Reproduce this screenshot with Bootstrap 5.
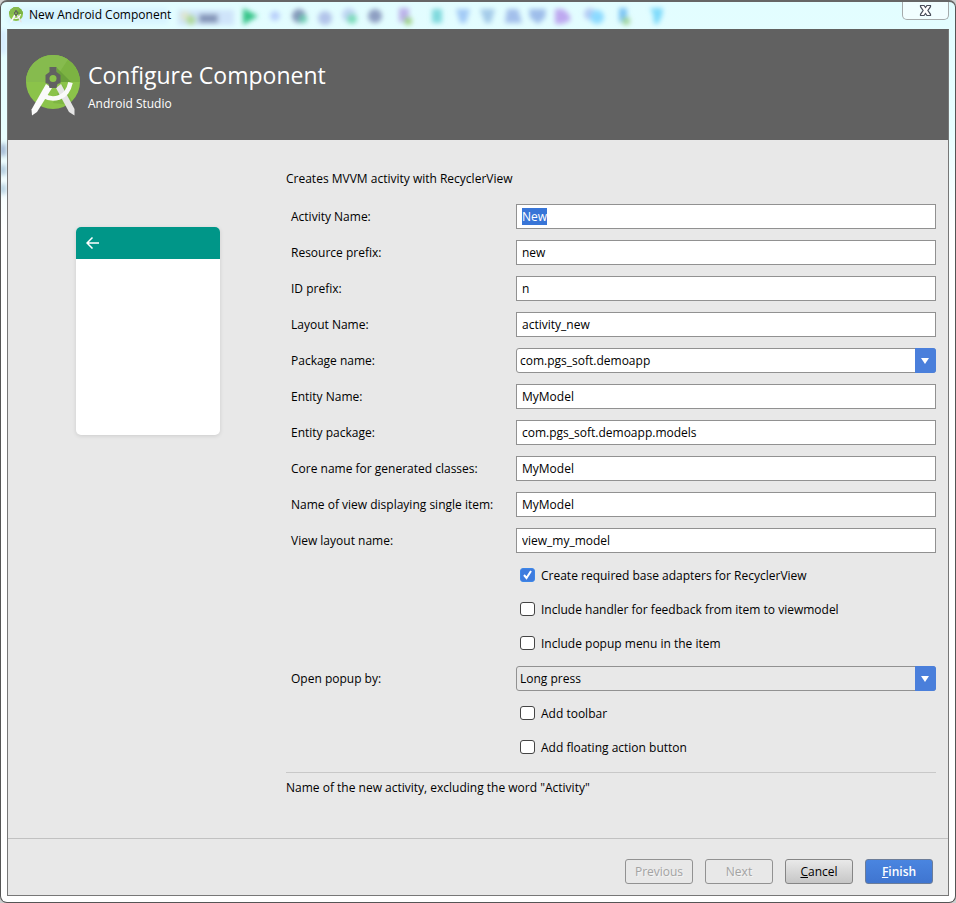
<!DOCTYPE html>
<html lang="en">
<head>
<meta charset="utf-8">
<meta name="viewport" content="width=device-width, initial-scale=1">
<title>New Android Component</title>
<link href="https://cdn.jsdelivr.net/npm/bootstrap@5.3.0/dist/css/bootstrap.min.css" rel="stylesheet">
<style>
  body { background: #cfcfcf; color: #000; font-family: "Open Sans", "Noto Sans", sans-serif; font-size: 12px; line-height: 16px; }
  .win { background: linear-gradient(#e2fdff 0, #e8feff 130px, #fff 230px); border: 1px solid #555; border-top: 2px solid #666; border-radius: 7px; padding: 0 6px 6px; }
  .titlebar { height: 27px; }
  .glass { left: 0; top: 0; z-index: 0; }
  .caption-text { z-index: 1; padding: 1px 0 0 2px; gap: 6px; }
  .close-btn { width: 47px; height: 18px; background: #f1feff; border: 1px solid #a5aaab; border-top: 0; border-radius: 0 0 5px 5px; }
  .client { background: #e8e8e8; border: 1px solid #777; border-top-color: #616161; }
  .banner { background: #616161; color: #fff; min-height: 110px; padding: 0 18px; gap: 8px; }
  .banner h1 { font-size: 23px; line-height: 32px; font-weight: 400; margin: 0 0 5px; }
  .banner .titles { padding-top: 29px; }
  .banner .logo { margin-top: 25px; }
  .preview-col { flex: 0 0 278px; padding: 87px 0 0 68px; }
  .phone { width: 144px; height: 208px; background: #fff; border-radius: 5px; box-shadow: 0 1px 4px rgba(0,0,0,.12); }
  .phone-bar { height: 32px; background: #009688; padding-left: 10px; }
  .form-col { padding: 31px 12px 0 0; }
  .intro { margin-bottom: 17px; }
  .fields { gap: 11px; }
  .lbl { flex: 0 0 230px; padding-left: 5px; }
  .form-control, .form-select { height: 25px; min-height: 25px; padding: 3px 5px; border: 1px solid #919191; border-radius: 0; font-size: 12px; line-height: 16px; color: #000; background-color: #fff; }
  .form-control:focus, .form-select:focus { border-color: #919191; box-shadow: none; caret-color: transparent; }
  ::selection { background: #3875d7; color: #fff; }
  .form-select { padding: 3px 24px 3px 3px; border-radius: 3px; text-indent: 0; background-image: none; }
  .form-select.muted-bg { background-color: #e8e8e8; }
  .arrow { right: 0; top: 0; width: 21px; height: 25px; padding-right: 1px; background: #4a7fdb; border-radius: 0 3px 3px 0; pointer-events: none; }
  .check-row { height: 23px; margin-left: 234px; gap: 6px; }
  .form-check-input { width: 15px; height: 14px; margin: 0 0 1px; flex: none; border: 1px solid #444; background-color: #fff; }
  .form-check-input[type=checkbox] { border-radius: 3px; }
  .form-check-input:checked[type=checkbox] { background-color: #3f7cde; border-color: #3d87e8; background-size: 15px 15px; background-image: url("data:image/svg+xml,%3csvg xmlns='http://www.w3.org/2000/svg' viewBox='0 0 15 15'%3e%3cpath d='M4 7.500l2.500 3L11 3.500' fill='none' stroke='%23fff' stroke-width='2'/%3e%3c/svg%3e"); }
  .hint { border-top: 1px solid #c8c8c8; margin-top: 13px; padding-top: 7px; }
  .actions { border-top: 1px solid #c1c1c1; padding: 20px 15px 11px; gap: 12px; }
  .actions .btn { width: 68px; height: 25px; padding: 0; font-size: 12px; line-height: 22px; border: 1px solid #858585; border-radius: 3px; color: #000; }
  .actions .btn:disabled { color: #a3a3a3; opacity: 1; border-color: #929292; text-shadow: 1px 1px #f4f4f4; }
  .actions .cancel { background: linear-gradient(#e9e9e9, #c6c6c6); }
  .actions .finish { background: linear-gradient(#4a85e0, #3f75d0); color: #fff; font-weight: 600; border-color: #6c7d99; }
</style>
</head>
<body>
<svg class="d-none" xmlns="http://www.w3.org/2000/svg">
  <symbol id="studio" viewBox="0 0 54 61">
    <circle cx="27" cy="27" r="27" fill="#8bc34a"/>
    <path d="M0 27a27 27 0 0 1 54 0z" fill="#7cb342"/>
    <path d="M0 27a27 27 0 0 1 42-22.500L27 27z" fill="#86bb4e"/>
    <path d="M31 13l14 14H29z" fill="#649a38" opacity=".75"/>
    <path d="M36 29L27 48 41 49.500l5-3.500z" fill="#76ad3f" opacity=".6"/>
    <path d="M20 29l6 4L11 57l-5 3.500-.5-6z" fill="#fafafa"/>
    <path d="M35 29l-5 4 13 24 5.500 3.500V54z" fill="#e5e5e5"/>
    <path d="M18 41q7 4 15 1.500 9-3 11.500-15" fill="none" stroke="#fafafa" stroke-width="4.600"/>
    <path d="M23.500 12h7v5l4 3v8l-3 1-1 4h-7l-1-4-3-1v-8l4-3z" fill="#616161"/>
    <circle cx="27" cy="23.500" r="3.500" fill="#8bc34a"/>
  </symbol>
</svg>
<main class="win min-vh-100 d-flex flex-column position-relative overflow-hidden">
  <svg class="glass position-absolute" width="700" height="200" viewBox="1 2 700 200" aria-hidden="true">
    <defs><filter id="soft" x="-20%" y="-20%" width="140%" height="140%"><feGaussianBlur stdDeviation="2.500"/></filter></defs>
    <g filter="url(#soft)">
      <rect x="8" y="8" width="160" height="16" fill="#d3f0ff" opacity=".7"/>
      <rect x="178" y="10" width="56" height="15" fill="#cfe4fa"/>
      <circle cx="185" cy="16" r="5" fill="#dfe6d2"/><circle cx="191" cy="20" r="5" fill="#b0da98"/>
      <rect x="199" y="14" width="19" height="9" fill="#8495b8"/>
      <path d="M243 8l15 8-15 9z" fill="#36c488"/>
      <circle cx="275" cy="16" r="5" fill="#b9d0fb"/>
      <circle cx="299" cy="16" r="7" fill="#8497ba"/><circle cx="303" cy="19" r="4" fill="#6ccab0"/>
      <circle cx="325" cy="18" r="7" fill="#b2c4ea"/>
      <circle cx="349" cy="15" r="7" fill="#bfd4f3"/><circle cx="352" cy="19" r="5" fill="#7cdcba"/>
      <circle cx="375" cy="16" r="7" fill="#8e9fc2"/>
      <rect x="399" y="8" width="10" height="14" fill="#bcb2ea"/><circle cx="408" cy="21" r="4" fill="#9fd284"/>
      <rect x="432" y="9" width="10" height="14" fill="#7fd9dd"/>
      <path d="M456 9h14l-4 14h-6z" fill="#a3caf6"/>
      <path d="M480 9h15l-4 14h-6z" fill="#a4cbe9"/>
      <path d="M507 9h11l4 14h-17z" fill="#a3bfeb"/>
      <path d="M529 9h17l-1 9-7 6-8-6z" fill="#9ebdea"/>
      <path d="M555 9h8q9 6 7 12l-8 3h-7z" fill="#bea8f0"/>
      <circle cx="590" cy="14" r="6" fill="#b5caf4"/><circle cx="597" cy="17" r="7" fill="#8cdaff"/>
      <rect x="619" y="8" width="8" height="14" fill="#7cc4f4"/><circle cx="626" cy="21" r="4" fill="#a0d49a"/>
      <path d="M650 8h13l-1 8-4 8h-4l-1-10z" fill="#7edafa"/>
      <rect x="0" y="30" width="6" height="24" fill="#d3e8ff"/>
      <rect x="0" y="144" width="6" height="12" fill="#96aecd"/>
      <rect x="0" y="165" width="6" height="10" fill="#a6c2d8"/>
      <rect x="0" y="184" width="6" height="10" fill="#adcbdd"/>
    </g>
  </svg>
  <header class="titlebar d-flex justify-content-between align-items-start">
    <div class="caption-text position-relative d-flex align-items-center">
      <svg class="mt-1" width="14" height="16" aria-hidden="true"><use href="#studio"/></svg>
      <span class="mt-1">New Android Component</span>
    </div>
    <button type="button" class="close-btn position-relative d-flex align-items-center justify-content-center p-0" aria-label="Close">
      <svg width="13" height="11" viewBox="0 0 13 11"><path d="M1.500.5h3.500l1.500 2L8 .5h3.500v1.200L8.900 5.500l2.600 3.800v1.200H8l-1.500-2-1.500 2H1.500V9.300l2.600-3.800-2.600-3.800z" fill="#fff" stroke="#4a4f5c" stroke-width="1.200"/></svg>
    </button>
  </header>
  <div class="client flex-grow-1 d-flex flex-column position-relative">
    <div class="banner d-flex">
      <svg class="logo flex-shrink-0" width="54" height="61" role="img" aria-label="Android Studio"><use href="#studio"/></svg>
      <div class="titles">
        <h1>Configure Component</h1>
        <div>Android Studio</div>
      </div>
    </div>
    <div class="flex-grow-1 d-flex">
      <aside class="preview-col">
        <div class="phone overflow-hidden">
          <div class="phone-bar d-flex align-items-center">
            <svg width="13" height="12" viewBox="0 0 13 12" fill="none" stroke="#fff" stroke-width="1.500"><path d="M6.500.5L1 6l5.500 5.500M1 6h12"/></svg>
          </div>
        </div>
      </aside>
      <form class="form-col flex-grow-1" id="component">
        <div class="intro">Creates MVVM activity with RecyclerView</div>
        <div class="fields d-flex flex-column">
          <div class="d-flex align-items-center"><label class="lbl" for="activity">Activity Name:</label><input class="form-control" id="activity" value="New" autofocus></div>
          <div class="d-flex align-items-center"><label class="lbl" for="resource">Resource prefix:</label><input class="form-control" id="resource" value="new"></div>
          <div class="d-flex align-items-center"><label class="lbl" for="idprefix">ID prefix:</label><input class="form-control" id="idprefix" value="n"></div>
          <div class="d-flex align-items-center"><label class="lbl" for="layout">Layout Name:</label><input class="form-control" id="layout" value="activity_new"></div>
          <div class="d-flex align-items-center"><label class="lbl" for="package">Package name:</label>
            <div class="position-relative flex-grow-1"><select class="form-select" id="package"><option>com.pgs_soft.demoapp</option></select>
              <span class="arrow position-absolute d-flex align-items-center justify-content-center"><svg width="8" height="6"><path d="M0 0h8L4 6z" fill="#fff"/></svg></span></div></div>
          <div class="d-flex align-items-center"><label class="lbl" for="entity">Entity Name:</label><input class="form-control" id="entity" value="MyModel"></div>
          <div class="d-flex align-items-center"><label class="lbl" for="entitypkg">Entity package:</label><input class="form-control" id="entitypkg" value="com.pgs_soft.demoapp.models"></div>
          <div class="d-flex align-items-center"><label class="lbl" for="core">Core name for generated classes:</label><input class="form-control" id="core" value="MyModel"></div>
          <div class="d-flex align-items-center"><label class="lbl" for="itemview">Name of view displaying single item:</label><input class="form-control" id="itemview" value="MyModel"></div>
          <div class="d-flex align-items-center"><label class="lbl" for="viewlayout">View layout name:</label><input class="form-control" id="viewlayout" value="view_my_model"></div>
          <div class="check-row d-flex align-items-center"><input class="form-check-input" type="checkbox" id="adapters" checked><label for="adapters">Create required base adapters for RecyclerView</label></div>
          <div class="check-row d-flex align-items-center"><input class="form-check-input" type="checkbox" id="handler"><label for="handler">Include handler for feedback from item to viewmodel</label></div>
          <div class="check-row d-flex align-items-center"><input class="form-check-input" type="checkbox" id="popup"><label for="popup">Include popup menu in the item</label></div>
          <div class="d-flex align-items-center"><label class="lbl" for="openby">Open popup by:</label>
            <div class="position-relative flex-grow-1"><select class="form-select muted-bg" id="openby"><option>Long press</option></select>
              <span class="arrow position-absolute d-flex align-items-center justify-content-center"><svg width="8" height="6"><path d="M0 0h8L4 6z" fill="#fff"/></svg></span></div></div>
          <div class="check-row d-flex align-items-center"><input class="form-check-input" type="checkbox" id="toolbar"><label for="toolbar">Add toolbar</label></div>
          <div class="check-row d-flex align-items-center"><input class="form-check-input" type="checkbox" id="fab"><label for="fab">Add floating action button</label></div>
        </div>
        <div class="hint">Name of the new activity, excluding the word "Activity"</div>
      </form>
    </div>
    <footer class="actions d-flex justify-content-end">
      <button type="button" class="btn" disabled>Previous</button>
      <button type="button" class="btn" disabled>Next</button>
      <button type="button" class="btn cancel"><u>C</u>ancel</button>
      <button type="submit" form="component" class="btn finish"><u>F</u>inish</button>
    </footer>
  </div>
</main>
<script src="https://cdn.jsdelivr.net/npm/bootstrap@5.3.0/dist/js/bootstrap.bundle.min.js"></script>
<script>
  const first = document.getElementById('activity');
  first.focus();
  first.select();
</script>
</body>
</html>
